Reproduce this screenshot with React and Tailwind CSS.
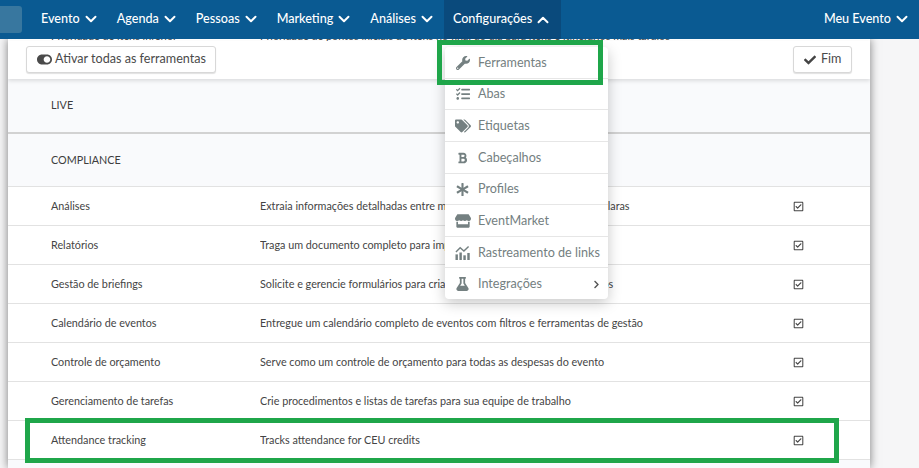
import { FaWrench, FaTasks, FaTags, FaBold, FaAsterisk, FaStore, FaFlask, FaToggleOn, FaCheck, FaRegCheckSquare, FaChevronRight } from "react-icons/fa"
import { ChevronDown, ChevronUp } from "lucide-react"

const navItems = ["Evento", "Agenda", "Pessoas", "Marketing", "Análises"]

const rows = [
  ["Análises", "Extraia informações detalhadas entre módulos para tomar decisões mais claras"],
  ["Relatórios", "Traga um documento completo para impressão de todas as atividades"],
  ["Gestão de briefings", "Solicite e gerencie formulários para criar resumos de todos os seus eventos"],
  ["Calendário de eventos", "Entregue um calendário completo de eventos com filtros e ferramentas de gestão"],
  ["Controle de orçamento", "Serve como um controle de orçamento para todas as despesas do evento"],
  ["Gerenciamento de tarefas", "Crie procedimentos e listas de tarefas para sua equipe de trabalho"],
  ["Attendance tracking", "Tracks attendance for CEU credits"],
]

const LinkChart = ({ className }) => (
  <svg viewBox="0 0 16 16" className={className} fill="currentColor">
    <rect x="0.5" y="10" width="2.6" height="6" />
    <rect x="4.7" y="8" width="2.6" height="8" />
    <rect x="8.9" y="11" width="2.6" height="5" />
    <rect x="13.1" y="8.5" width="2.6" height="7.5" />
    <path d="M1 7.5 5.5 3l4 3.5L14.5 1.5" fill="none" stroke="currentColor" strokeWidth="1.5" />
  </svg>
)

const menuItems = [
  { label: "Ferramentas", icon: <FaWrench className="w-[14px] h-[14px]" /> },
  { label: "Abas", icon: <FaTasks className="w-[14px] h-[14px]" /> },
  { label: "Etiquetas", icon: <FaTags className="w-[16px] h-[16px]" /> },
  { label: "Cabeçalhos", icon: <FaBold className="w-[11px] h-[12px]" /> },
  { label: "Profiles", icon: <FaAsterisk className="w-[13px] h-[13px]" /> },
  { label: "EventMarket", icon: <FaStore className="w-[16px] h-[14px]" /> },
  { label: "Rastreamento de links", icon: <LinkChart className="w-[15px] h-[15px]" /> },
  { label: "Integrações", icon: <FaFlask className="w-[13px] h-[14px]" />, arrow: true },
]

const Row = ({ name, text }) => (
  <div className="h-[39px] pt-[1px] flex items-center border-b border-[#e2e2e2] bg-white text-[10.8px] text-[#444]">
    <div className="w-[252px] pl-[43px] shrink-0">{name}</div>
    <div className="flex-1 whitespace-nowrap overflow-hidden">{text}</div>
    <div className="w-[77px] shrink-0">
      <FaRegCheckSquare className="w-[11px] h-[11px] text-[#444]" />
    </div>
  </div>
)

export default function App() {
  return (
    <div className="relative w-[919px] h-[468px] overflow-hidden bg-[#f6f6f7] font-['Lato','Liberation_Sans',sans-serif]">
      {/* Top nav */}
      <div className="relative z-20 h-[39px] bg-[#0a5a92] flex items-center text-white text-[12.6px] font-medium">
        <div className="w-[22px] h-[27px] bg-[#38779f] rounded-r-[3px] shrink-0 mr-[19px]" />
        {navItems.map((item) => (
          <div key={item} className="flex items-center gap-[2px] mr-[17px]">
            <span>{item}</span>
            <ChevronDown className="w-[18px] h-[18px]" strokeWidth={2.6} />
          </div>
        ))}
        <div className="h-full -ml-[9px] px-[9px] bg-[#0a4a7c] flex items-center gap-[2px]">
          <span>Configurações</span>
          <ChevronUp className="w-[18px] h-[18px]" strokeWidth={2.6} />
        </div>
        <div className="ml-auto mr-[8px] flex items-center gap-[2px]">
          <span>Meu Evento</span>
          <ChevronDown className="w-[18px] h-[18px]" strokeWidth={2.6} />
        </div>
      </div>

      {/* Main panel */}
      <div className="ml-[8px] w-[862px] shadow-[0_0_9px_rgba(0,0,0,0.5)] bg-[#f9fafc] h-[429px] overflow-hidden">
        {/* row scrolled under the nav, only its last pixels show */}
        <div className="h-[2px] overflow-hidden bg-white flex text-[10.8px] text-[#444]">
          <div className="w-[252px] pl-[43px] shrink-0 h-[11px] leading-[11px] -mt-[9px] whitespace-nowrap">Prioridade de itens inferior</div>
          <div className="flex-1 h-[11px] leading-[11px] -mt-[9px] whitespace-nowrap overflow-hidden">Prioridade de pontos iniciais de itens no final do dia para itens e itinerários mais tardios</div>
        </div>
        <div className="relative z-10 h-[38px] bg-white flex items-start justify-between pt-[5px] px-[18px] shadow-[0_2px_4px_rgba(0,0,0,0.12)]">
          <button className="h-[27px] w-[190px] pl-[10px] flex items-center gap-[3px] bg-white border border-[#d8d8d8] rounded-[3px] shadow-[0_1px_1px_rgba(0,0,0,0.12)] text-[12.6px] text-[#4a4a4a] whitespace-nowrap">
            <FaToggleOn className="w-[15px] h-[15px] text-[#4a4a4a]" />
            Ativar todas as ferramentas
          </button>
          <button className="h-[27px] w-[59px] pl-[10px] flex items-center gap-[5px] bg-white border border-[#d8d8d8] rounded-[3px] shadow-[0_1px_1px_rgba(0,0,0,0.12)] text-[12.6px] text-[#4a4a4a]">
            <FaCheck className="w-[12px] h-[12px] text-[#444]" />
            Fim
          </button>
        </div>
        <div className="h-[55px] flex items-center pl-[43px] text-[10.8px] text-[#3d3d3d] bg-[#f9fafc] border-b-[2px] border-[#d2d2d2] shadow-[0_1px_3px_rgba(0,0,0,0.2)]">LIVE</div>
        <div className="h-[53px] flex items-center pl-[43px] text-[10.8px] text-[#3d3d3d] bg-[#f9fafc] border-b border-[#e2e2e2]">COMPLIANCE</div>
        {rows.map(([name, text]) => (
          <Row key={name} name={name} text={text} />
        ))}
      </div>

      {/* Dropdown */}
      <div className="absolute z-30 left-[445px] top-[47px] w-[163px] h-[252px] bg-white rounded-[4px] shadow-[0_4px_14px_rgba(0,0,0,0.22)] text-[12.6px] text-[#748081] flex flex-col">
        {menuItems.map((m, i) => (
          <div key={m.label} className={`flex-1 flex items-center pt-[1px] border-[#e6e6e6] ${i < menuItems.length - 1 ? "border-b" : ""}`}>
            <span className="w-[33px] flex justify-center pl-[2px] shrink-0">{m.icon}</span>
            <span className="whitespace-nowrap pt-[1px]">{m.label}</span>
            {m.arrow && <FaChevronRight className="ml-auto mr-[8px] w-[7px] h-[9px] text-[#555]" />}
          </div>
        ))}
      </div>

      {/* Green annotations */}
      <div className="absolute z-40 left-[437px] top-[40px] w-[166px] h-[45px] border-[5px] border-[#1fa64a]" />
      <div className="absolute z-40 left-[25px] top-[418px] w-[814px] h-[45px] border-[5px] border-[#1fa64a]" />
    </div>
  )
}
